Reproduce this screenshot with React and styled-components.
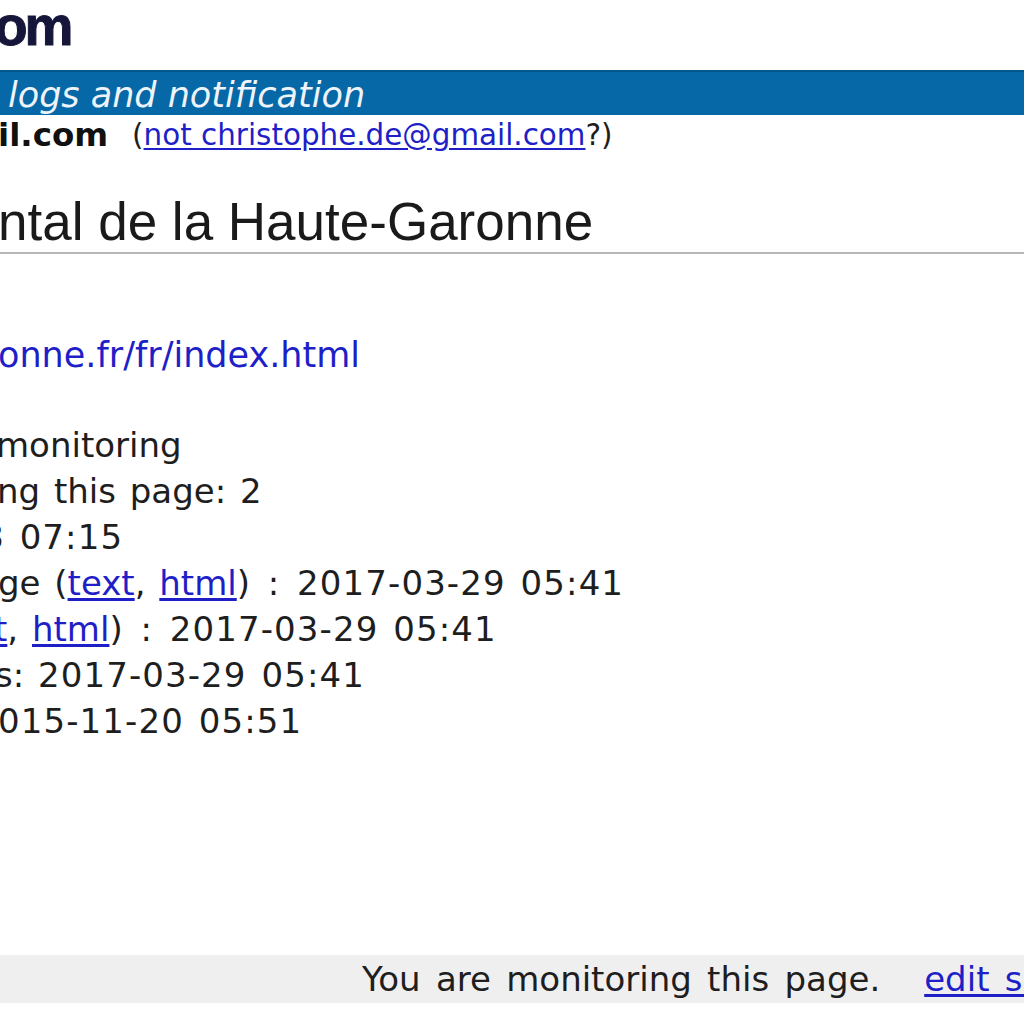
import React from "react";
import styled, { createGlobalStyle } from "styled-components";

const GlobalStyle = createGlobalStyle`
  html, body {
    margin: 0;
    padding: 0;
    background: #ffffff;
    overflow: hidden;
  }
`;

const Page = styled.div`
  width: 1024px;
  height: 1024px;
  overflow: hidden;
  display: flex;
  flex-direction: column;
  font-family: "DejaVu Sans", Verdana, sans-serif;
  color: #1e1e1e;
  white-space: nowrap;
`;

const Header = styled.div`
  height: 70px;
  display: flex;
  align-items: flex-start;
  overflow: hidden;
`;

const Logo = styled.span`
  font-family: "Liberation Sans", Arial, sans-serif;
  font-weight: 700;
  font-size: 55px;
  line-height: 55px;
  letter-spacing: -3px;
  color: #15163a;
  margin: -1px 0 0 -6px;
  -webkit-text-stroke: 1px #15163a;
`;

const BlueBar = styled.div`
  height: 45px;
  background: #0668a6;
  border-top: 2px solid #04578c;
  box-sizing: border-box;
  display: flex;
  align-items: center;
  overflow: hidden;
`;

const BarTitle = styled.span`
  font-style: italic;
  font-size: 35px;
  line-height: 43px;
  color: #eef4fa;
  margin: 4px 0 0 8px;
`;

const UserLine = styled.div`
  height: 40px;
  display: flex;
  align-items: center;
  font-size: 29.4px;
  line-height: 40px;
`;

const Email = styled.b`
  font-weight: 700;
  font-size: 32.5px;
  color: #111;
  margin-right: 24px;
`;

const Link = styled.a`
  color: #1f1fc8;
  text-decoration: underline;
  text-underline-offset: 3px;
`;

const Title = styled.h1`
  margin: 37px 0 0 0;
  font-family: "Liberation Sans", Arial, sans-serif;
  font-weight: 400;
  font-size: 53px;
  line-height: 60px;
  color: #1a1a1a;
  border-bottom: 2px solid #b6b6b6;
  overflow: hidden;
`;

const Cut = styled.span`
  display: inline-block;
  margin-left: ${(p) => p.$shift || 0}px;
`;

const UrlLine = styled.div`
  margin-top: 78px;
  font-size: 35px;
  line-height: 46px;
  overflow: hidden;
`;

const InfoList = styled.div`
  margin-top: 44px;
  display: flex;
  flex-direction: column;
  font-size: 34px;
  line-height: 46px;
  word-spacing: 3px;
`;

const InfoRow = styled.div`
  overflow: hidden;
`;

const Stamp = styled.span`
  letter-spacing: 1.1px;
`;

const Sep = styled.span`
  padding: 0 4px;
`;

const Spacer = styled.div`
  flex: 1;
`;

const Footer = styled.div`
  height: 48px;
  margin-bottom: 21px;
  background: #efefef;
  display: flex;
  align-items: center;
  padding-left: 362px;
  font-size: 34px;
  line-height: 48px;
  word-spacing: 4.5px;
  overflow: hidden;
`;

const FooterLink = styled(Link)`
  margin-left: 44px;
`;

export default function App() {
  return (
    <Page>
      <GlobalStyle />
      <Header>
        <Logo>om</Logo>
      </Header>
      <BlueBar>
        <BarTitle>logs and notification</BarTitle>
      </BlueBar>
      <UserLine>
        <Email>
          <Cut $shift={-2}>il.com</Cut>
        </Email>
        <span>
          (<Link href="#">not christophe.de@gmail.com</Link>?)
        </span>
      </UserLine>
      <Title>
        <Cut $shift={-2}>ntal de la Haute-Garonne</Cut>
      </Title>
      <UrlLine>
        <Link href="#">
          <Cut $shift={-2}>onne.fr/fr/index.html</Cut>
        </Link>
      </UrlLine>
      <InfoList>
        <InfoRow>
          <Cut $shift={-4}>monitoring</Cut>
        </InfoRow>
        <InfoRow>
          <Cut $shift={-3}>ng this page: 2</Cut>
        </InfoRow>
        <InfoRow>
          <Cut $shift={-18}>
            <Stamp>8 07:15</Stamp>
          </Cut>
        </InfoRow>
        <InfoRow>
          <Cut $shift={-2}>
            ge (<Link href="#">text</Link>, <Link href="#">html</Link>)
            <Sep> : </Sep>
            <Stamp>2017-03-29 05:41</Stamp>
          </Cut>
        </InfoRow>
        <InfoRow>
          <Cut $shift={-6}>
            <Link href="#">t</Link>, <Link href="#">html</Link>)
            <Sep> : </Sep>
            <Stamp>2017-03-29 05:41</Stamp>
          </Cut>
        </InfoRow>
        <InfoRow>
          <Cut $shift={-5}>
            s: <Stamp>2017-03-29 05:41</Stamp>
          </Cut>
        </InfoRow>
        <InfoRow>
          <Cut $shift={-2}>
            <Stamp>015-11-20 05:51</Stamp>
          </Cut>
        </InfoRow>
      </InfoList>
      <Spacer />
      <Footer>
        You are monitoring this page.
        <FooterLink href="#">edit settings</FooterLink>
      </Footer>
    </Page>
  );
}
